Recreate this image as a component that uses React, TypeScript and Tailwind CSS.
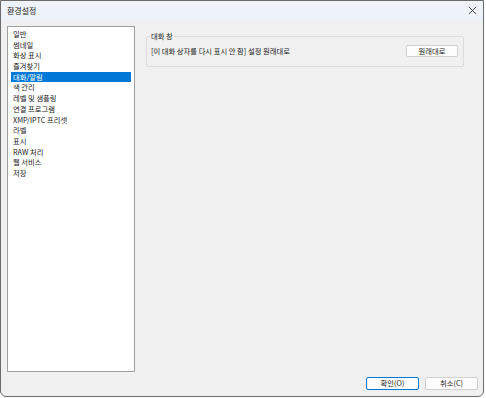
const items = [
  "일반",
  "썸네일",
  "화상 표시",
  "즐겨찾기",
  "대화/알림",
  "색 관리",
  "레벨 및 샘플링",
  "연결 프로그램",
  "XMP/IPTC 프리셋",
  "라벨",
  "표시",
  "RAW 처리",
  "웹 서비스",
  "저장",
];

const font = { fontFamily: '"Noto Sans CJK KR", "Liberation Sans", sans-serif' };

export default function App() {
  return (
    <div className="w-[486px] h-[398px] bg-white" style={font}>
      <div className="w-[484px] h-[397px] flex flex-col border border-[#6b6b6b] rounded-b-[6px] overflow-hidden bg-[#f0f0f0] text-[7.3px] text-[#1a1a1a]">
        <div className="h-[19px] shrink-0 flex items-center justify-between pl-[6px] pr-[5px] bg-[#eef3fa]">
          <span className="text-[8px]">환경설정</span>
          <svg width="9" height="9" viewBox="0 0 10 10" className="mr-[1px]">
            <path d="M1 1 L9 9 M9 1 L1 9" stroke="#333" strokeWidth="1" />
          </svg>
        </div>
        <div className="flex-1 flex pl-[6px] pt-[6px]">
          <div className="w-[128px] h-[346px] bg-white border border-[#a0a0a0] pt-[2px] px-[3px]">
            {items.map((it) => (
              <div
                key={it}
                className={
                  "h-[10.7px] leading-[10.7px] pl-[2px] " +
                  (it === "대화/알림" ? "bg-[#0078d7] text-white" : "")
                }
              >
                {it}
              </div>
            ))}
          </div>
          <div className="flex-1 flex flex-col">
            <div className="ml-[11px] mr-[19px] mt-[10px] border border-[#dcdcdc] rounded-[2px] h-[31px] relative px-[4px]">
              <span className="absolute -top-[6px] left-[3px] px-[1px] bg-[#f0f0f0] leading-[10px]">대화 창</span>
              <div className="flex items-center justify-between mt-[8px]">
                <span>[이 대화 상자를 다시 표시 안 함] 설정 원래대로</span>
                <button className="w-[52px] h-[12px] mr-[1px] bg-[#fdfdfd] border border-[#d0d0d0] rounded-[2px] leading-[10px]">원래대로</button>
              </div>
            </div>
            <div className="flex-1" />
            <div className="flex justify-end gap-[6px] pr-[5px] pb-[6px]">
              <button className="w-[53px] h-[13px] bg-[#fdfdfd] border border-[#0078d7] rounded-[2px] leading-[11px]">확인(O)</button>
              <button className="w-[53px] h-[13px] bg-[#fdfdfd] border border-[#d0d0d0] rounded-[2px] leading-[11px]">취소(C)</button>
            </div>
          </div>
        </div>
      </div>
    </div>
  );
}
